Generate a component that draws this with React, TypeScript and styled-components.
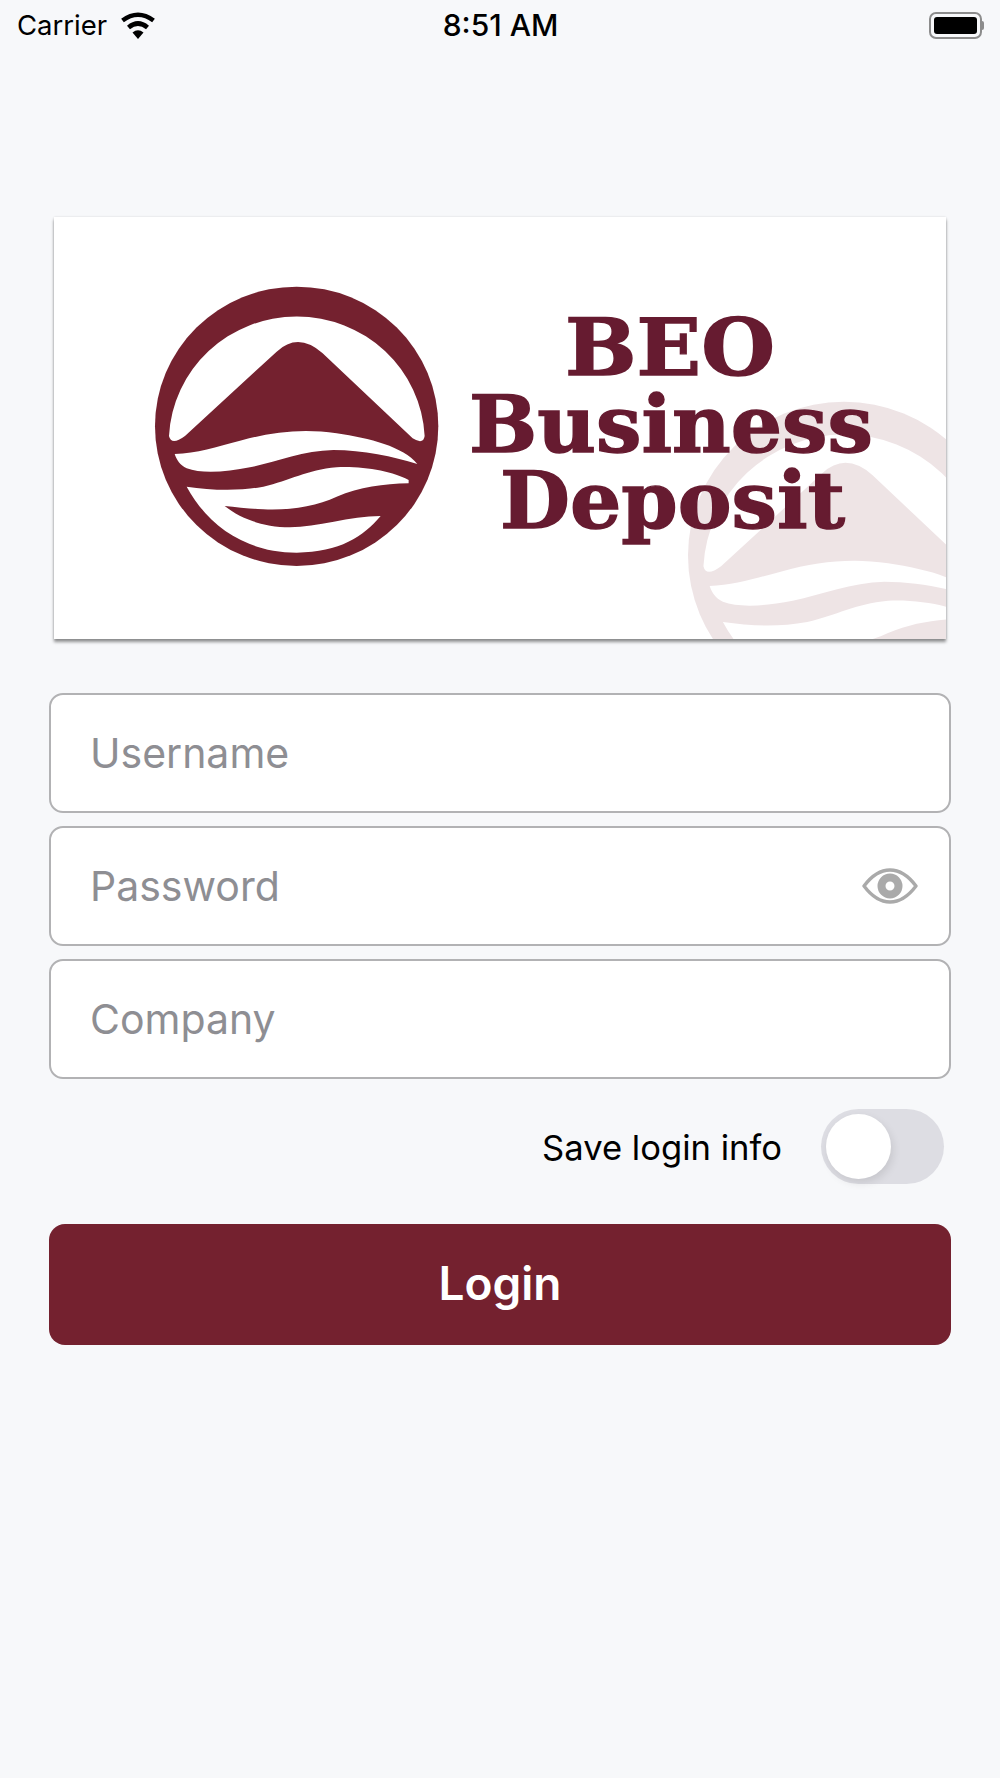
import React from 'react';
import styled, { createGlobalStyle } from 'styled-components';

const GlobalStyle = createGlobalStyle`
  html, body {
    margin: 0;
    padding: 0;
    background: #f7f8fa;
  }
  * {
    box-sizing: border-box;
  }
`;

const LogoMark = () => (
  <>
    <ellipse cx="500" cy="469" rx="425" ry="419" fill="#74212f" />
    <path
      fill="#fff"
      d="M117 498 A384 378 0 0 1 884 498 Q880 525 848 505 L578 250 Q505 185 440 245 L165 498 Q124 528 117 498 Z"
    />
    <path
      fill="#fff"
      d="M134 552 C200 550 260 530 330 512 C430 485 520 475 620 490 C720 505 820 530 862 582 C790 560 700 540 610 540 C520 542 440 575 360 592 C290 606 215 612 170 595 C150 585 140 570 134 552 Z"
    />
    <path
      fill="#fff"
      d="M170 650 C240 660 320 665 400 650 C480 632 530 600 620 592 C700 588 790 605 836 630 L836 640 C760 642 690 650 620 680 C560 708 480 722 400 718 C360 716 320 712 284 708 C330 745 400 772 480 772 C560 772 660 738 752 738 C700 800 630 846 500 848 C350 848 235 770 170 650 Z"
    />
  </>
);

const App = () => {
  return (
    <>
      <GlobalStyle />
      <Screen>
        <StatusBar>
          <StatusLeft>
            <Carrier>Carrier</Carrier>
            <svg width="36" height="27" viewBox="0 0 36 27">
              <path d="M18 27 L12.5 20.5 Q18 16 23.5 20.5 Z" fill="#000" />
              <path d="M8.5 15.5 Q18 7.5 27.5 15.5" fill="none" stroke="#000" strokeWidth="4.6" />
              <path d="M2.5 8.5 Q18 -3 33.5 8.5" fill="none" stroke="#000" strokeWidth="4.6" />
            </svg>
          </StatusLeft>
          <Clock>8:51 AM</Clock>
          <Battery>
            <BatteryBody>
              <BatteryFill />
            </BatteryBody>
            <BatteryNub />
          </Battery>
        </StatusBar>

        <Content>
          <LogoCard>
            <LogoImage viewBox="0 0 892 422">
              <g transform="translate(606.5 166.5) scale(0.367)" opacity="0.12">
                <LogoMark />
              </g>
              <g transform="translate(76 53) scale(0.3333)">
                <LogoMark />
              </g>
              <LogoText x="511" y="158" textLength="210" lengthAdjust="spacingAndGlyphs">
                BEO
              </LogoText>
              <LogoText x="415" y="235" textLength="404" lengthAdjust="spacingAndGlyphs">
                Business
              </LogoText>
              <LogoText x="446" y="311" textLength="345" lengthAdjust="spacingAndGlyphs">
                Deposit
              </LogoText>
            </LogoImage>
          </LogoCard>

          <Fields>
            <Field>
              <Input type="text" placeholder="Username" />
            </Field>
            <Field>
              <Input type="password" placeholder="Password" />
              <EyeButton type="button">
                <svg width="56" height="36" viewBox="0 0 56 36">
                  <path
                    d="M2 18 Q14 2 28 2 Q42 2 54 18 Q42 34 28 34 Q14 34 2 18 Z"
                    fill="none"
                    stroke="#aaaaaa"
                    strokeWidth="3.4"
                    strokeLinejoin="round"
                  />
                  <circle cx="28" cy="18" r="8.5" fill="none" stroke="#aaaaaa" strokeWidth="8" />
                </svg>
              </EyeButton>
            </Field>
            <Field>
              <Input type="text" placeholder="Company" />
            </Field>
          </Fields>

          <SaveRow>
            <SaveLabel>Save login info</SaveLabel>
            <Toggle>
              <Thumb />
            </Toggle>
          </SaveRow>

          <LoginButton type="button">Login</LoginButton>
        </Content>
      </Screen>
    </>
  );
};

export default App;

const Screen = styled.div`
  width: 1000px;
  height: 1778px;
  overflow: hidden;
  background: #f7f8fa;
  font-family: Inter, 'Noto Sans', sans-serif;
`;

const StatusBar = styled.div`
  display: grid;
  grid-template-columns: 1fr auto 1fr;
  align-items: center;
  height: 50px;
  padding: 0 16px 0 17px;
`;

const StatusLeft = styled.div`
  display: flex;
  align-items: center;
  gap: 13px;
`;

const Carrier = styled.span`
  font-size: 27.5px;
  color: #000;
`;

const Clock = styled.span`
  font-size: 30px;
  font-weight: 500;
  color: #000;
`;

const Battery = styled.div`
  display: flex;
  align-items: center;
  justify-content: flex-end;
`;

const BatteryBody = styled.div`
  width: 53px;
  height: 27px;
  padding: 3px;
  border: 2px solid #8c8c8c;
  border-radius: 7px;
`;

const BatteryFill = styled.div`
  height: 100%;
  border-radius: 3px;
  background: #000;
`;

const BatteryNub = styled.div`
  width: 2px;
  height: 9px;
  border-radius: 0 2px 2px 0;
  background: #8c8c8c;
`;

const Content = styled.div`
  display: flex;
  flex-direction: column;
  padding: 167px 49px 0;
`;

const LogoCard = styled.div`
  margin: 0 5px;
  height: 422px;
  background: #fff;
  box-shadow: 0 3px 3px rgba(0, 0, 0, 0.42), 0 0 2px rgba(0, 0, 0, 0.12);
`;

const LogoImage = styled.svg`
  display: block;
  width: 100%;
  height: 100%;
  filter: blur(0.5px);
`;

const LogoText = styled.text`
  font-family: 'DejaVu Serif', serif;
  font-size: 78px;
  font-weight: 700;
  fill: #661b30;
  stroke: #661b30;
  stroke-width: 1.4px;
`;

const Fields = styled.div`
  display: flex;
  flex-direction: column;
  gap: 13px;
  margin-top: 54px;
`;

const Field = styled.div`
  display: flex;
  align-items: center;
  height: 120px;
  padding: 0 31px 0 39px;
  border: 2px solid #b2b2b4;
  border-radius: 14px;
  background: #fff;
`;

const Input = styled.input`
  flex: 1;
  min-width: 0;
  padding: 0;
  border: 0;
  outline: 0;
  background: transparent;
  font-family: inherit;
  font-size: 41px;
  color: #000;

  &::placeholder {
    color: #8e8e93;
    opacity: 1;
  }
`;

const EyeButton = styled.button`
  display: flex;
  padding: 0;
  border: 0;
  background: transparent;
`;

const SaveRow = styled.div`
  display: flex;
  align-items: center;
  justify-content: flex-end;
  gap: 39px;
  margin-top: 30px;
  padding-right: 7px;
`;

const SaveLabel = styled.span`
  font-size: 34.6px;
  color: #000;
`;

const Toggle = styled.div`
  display: flex;
  align-items: center;
  width: 123px;
  height: 75px;
  padding: 0 5px;
  border-radius: 38px;
  background: #dddde3;
`;

const Thumb = styled.div`
  width: 65px;
  height: 65px;
  border-radius: 50%;
  background: #fff;
  box-shadow: 2px 4px 8px rgba(0, 0, 0, 0.1);
`;

const LoginButton = styled.button`
  height: 121px;
  margin-top: 40px;
  padding: 0 0 3px;
  border: 0;
  border-radius: 16px;
  background: #74212f;
  font-family: inherit;
  font-size: 46px;
  font-weight: 600;
  color: #fff;
`;
